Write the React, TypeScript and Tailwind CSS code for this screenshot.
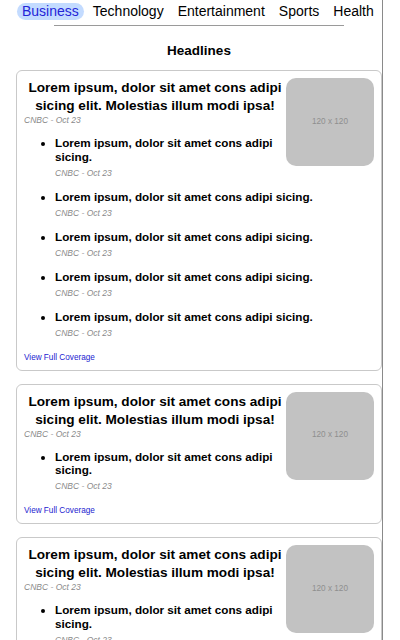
import React from "react";

const navItems = ["Business", "Technology", "Entertainment", "Sports", "Health"];

function Card({ items }: { items: number }) {
  const list = Array.from({ length: items }, (_, i) => i);
  return (
    <div className="ml-[16px] mb-[13px] flow-root rounded-[6px] border border-[#c9c9c9] p-[7px]">
      <div className="float-right flex h-[88px] w-[88px] items-center justify-center rounded-[10px] bg-[#c2c2c2] text-[8.2px] text-[#8f8f8f]">
        120 x 120
      </div>
      <h3 className="mt-[1px] text-center text-[13.6px] font-bold leading-[18px] text-black">
        Lorem ipsum, dolor sit amet cons adipi sicing elit. Molestias illum modi ipsa!
      </h3>
      <p className="text-[8.5px] italic leading-[10px] text-[#8a8a8a]">CNBC - Oct 23</p>
      <ul className="mt-[11px] list-disc pl-[31px]">
        {list.map((i) => (
          <li key={i} className="mb-[12px] text-[11.7px] leading-[13.5px]">
            <h4 className="font-bold text-black">Lorem ipsum, dolor sit amet cons adipi sicing.</h4>
            <p className="mt-[4.5px] text-[8.5px] italic leading-[10px] text-[#8a8a8a]">CNBC - Oct 23</p>
          </li>
        ))}
      </ul>
      <a className="mt-[15px] block text-[8.2px] leading-[10px] text-[#1c1cd0]">View Full Coverage</a>
    </div>
  );
}

export default function App() {
  return (
    <div className="h-[640px] w-[400px] overflow-hidden bg-white font-['Liberation_Sans',Arial,sans-serif]">
      <div className="min-h-[640px] w-[383px] border-r border-[#8a8a8a]">
        <nav className="flex gap-[4px] pl-[17px] pt-[3px]">
          {navItems.map((n, i) => (
            <span
              key={n}
              className={
                i === 0
                  ? "h-[17px] whitespace-nowrap rounded-full bg-[#c3dbff] px-[5px] text-[14px] leading-[17px] text-[#2424d8]"
                  : "h-[17px] whitespace-nowrap px-[5px] text-[14px] leading-[17px] text-black"
              }
            >
              {n}
            </span>
          ))}
        </nav>
        <div className="ml-[16px]">
          <div className="mx-auto mt-[5px] h-px w-[290px] bg-[#9a9a9a]" />
          <h2 className="mt-[17px] text-center text-[13.5px] font-bold leading-[16px] text-black">Headlines</h2>
        </div>
        <div className="mt-[11px]">
          <Card items={5} />
          <Card items={1} />
          <Card items={1} />
        </div>
      </div>
    </div>
  );
}
